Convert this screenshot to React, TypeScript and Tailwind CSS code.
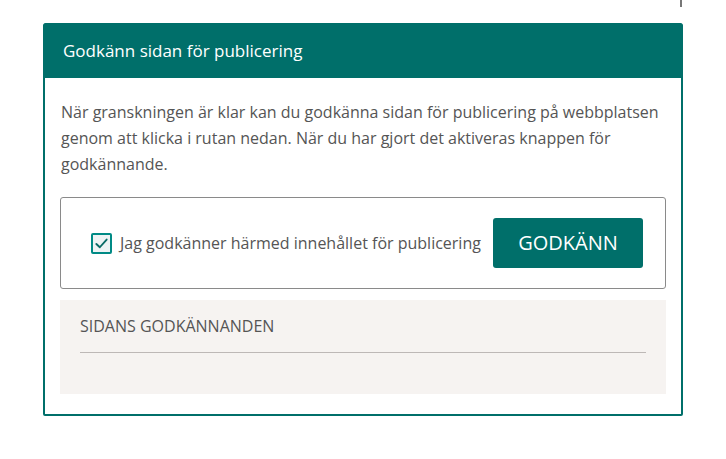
import React from "react";

export default function App() {
  return (
    <div className="relative w-[726px] h-[459px] bg-white" style={{ fontFamily: '"Open Sans", sans-serif' }}>
      <div className="absolute left-[680px] top-0 w-[2px] h-[7px] bg-[#777]" />
      <div className="pt-[23px] pl-[43px]">
        <div className="w-[640px] h-[393px] border-2 border-[#006f6a] rounded-t-[4px] rounded-b-[2px] flex flex-col">
          <div className="h-[55px] bg-[#006f6a] flex items-center pl-[18px] -mx-[2px] -mt-[2px] rounded-t-[3px] shrink-0">
            <span className="text-white text-[17px] pl-[2px]">Godkänn sidan för publicering</span>
          </div>
          <div className="px-[15px] pt-[21px]">
            <p className="text-[16px] leading-[26px] text-[#555] pl-[1px]">
              När granskningen är klar kan du godkänna sidan för publicering på webbplatsen genom att klicka i rutan nedan. När du har gjort det aktiveras knappen för godkännande.
            </p>
            <div className="mt-[20px] h-[92px] border border-[#8a8a8a] rounded-[3px] flex items-center pl-[30px] pr-[22px]">
              <div className="w-[21px] h-[21px] border-2 border-[#008a85] bg-[#eef3f4] rounded-[2px] flex items-center justify-center shrink-0">
                <svg width="15" height="15" viewBox="0 0 16 16" fill="none">
                  <path d="M2.5 8.5 L6.2 12 L13.5 3.8" stroke="#0a6b66" strokeWidth="2" strokeLinecap="round" strokeLinejoin="round" />
                </svg>
              </div>
              <span className="ml-[8px] text-[16px] text-[#555] whitespace-nowrap">Jag godkänner härmed innehållet för publicering</span>
              <button className="ml-auto w-[150px] h-[50px] bg-[#006f6a] rounded-[3px] text-white text-[20px]">GODKÄNN</button>
            </div>
            <div className="mt-[11px] h-[94px] bg-[#f6f3f1] px-[20px] pt-[15px]">
              <div className="text-[16px] text-[#555] leading-[22px]">SIDANS GODKÄNNANDEN</div>
              <div className="mt-[15px] h-px bg-[#bdb8b6]" />
            </div>
          </div>
        </div>
      </div>
    </div>
  );
}
